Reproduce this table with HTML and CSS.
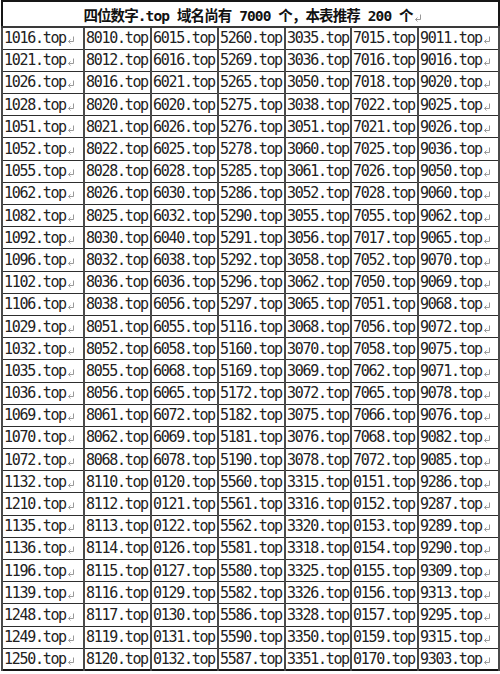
FILE: index.html
```html
<!DOCTYPE html>
<html lang="zh">
<head>
<meta charset="utf-8">
<title>四位数字.top 域名</title>
<link rel="stylesheet" href="styles.css">
</head>
<body>
<table class="grid">
<colgroup>
<col class="c-wide"><col class="c-mid"><col class="c-mid"><col class="c-mid"><col class="c-narrow"><col class="c-mid"><col class="c-last">
</colgroup>
<thead>
<tr class="head-row"><th colspan="7">四位数字.top 域名尚有 7000 个，本表推荐 200 个</th></tr>
</thead>
<tbody>
<tr><td>1016.top</td><td>8010.top</td><td>6015.top</td><td>5260.top</td><td>3035.top</td><td>7015.top</td><td>9011.top</td></tr>
<tr><td>1021.top</td><td>8012.top</td><td>6016.top</td><td>5269.top</td><td>3036.top</td><td>7016.top</td><td>9016.top</td></tr>
<tr><td>1026.top</td><td>8016.top</td><td>6021.top</td><td>5265.top</td><td>3050.top</td><td>7018.top</td><td>9020.top</td></tr>
<tr><td>1028.top</td><td>8020.top</td><td>6020.top</td><td>5275.top</td><td>3038.top</td><td>7022.top</td><td>9025.top</td></tr>
<tr><td>1051.top</td><td>8021.top</td><td>6026.top</td><td>5276.top</td><td>3051.top</td><td>7021.top</td><td>9026.top</td></tr>
<tr><td>1052.top</td><td>8022.top</td><td>6025.top</td><td>5278.top</td><td>3060.top</td><td>7025.top</td><td>9036.top</td></tr>
<tr><td>1055.top</td><td>8028.top</td><td>6028.top</td><td>5285.top</td><td>3061.top</td><td>7026.top</td><td>9050.top</td></tr>
<tr><td>1062.top</td><td>8026.top</td><td>6030.top</td><td>5286.top</td><td>3052.top</td><td>7028.top</td><td>9060.top</td></tr>
<tr><td>1082.top</td><td>8025.top</td><td>6032.top</td><td>5290.top</td><td>3055.top</td><td>7055.top</td><td>9062.top</td></tr>
<tr><td>1092.top</td><td>8030.top</td><td>6040.top</td><td>5291.top</td><td>3056.top</td><td>7017.top</td><td>9065.top</td></tr>
<tr><td>1096.top</td><td>8032.top</td><td>6038.top</td><td>5292.top</td><td>3058.top</td><td>7052.top</td><td>9070.top</td></tr>
<tr><td>1102.top</td><td>8036.top</td><td>6036.top</td><td>5296.top</td><td>3062.top</td><td>7050.top</td><td>9069.top</td></tr>
<tr><td>1106.top</td><td>8038.top</td><td>6056.top</td><td>5297.top</td><td>3065.top</td><td>7051.top</td><td>9068.top</td></tr>
<tr><td>1029.top</td><td>8051.top</td><td>6055.top</td><td>5116.top</td><td>3068.top</td><td>7056.top</td><td>9072.top</td></tr>
<tr><td>1032.top</td><td>8052.top</td><td>6058.top</td><td>5160.top</td><td>3070.top</td><td>7058.top</td><td>9075.top</td></tr>
<tr><td>1035.top</td><td>8055.top</td><td>6068.top</td><td>5169.top</td><td>3069.top</td><td>7062.top</td><td>9071.top</td></tr>
<tr><td>1036.top</td><td>8056.top</td><td>6065.top</td><td>5172.top</td><td>3072.top</td><td>7065.top</td><td>9078.top</td></tr>
<tr><td>1069.top</td><td>8061.top</td><td>6072.top</td><td>5182.top</td><td>3075.top</td><td>7066.top</td><td>9076.top</td></tr>
<tr><td>1070.top</td><td>8062.top</td><td>6069.top</td><td>5181.top</td><td>3076.top</td><td>7068.top</td><td>9082.top</td></tr>
<tr><td>1072.top</td><td>8068.top</td><td>6078.top</td><td>5190.top</td><td>3078.top</td><td>7072.top</td><td>9085.top</td></tr>
<tr><td>1132.top</td><td>8110.top</td><td>0120.top</td><td>5560.top</td><td>3315.top</td><td>0151.top</td><td>9286.top</td></tr>
<tr><td>1210.top</td><td>8112.top</td><td>0121.top</td><td>5561.top</td><td>3316.top</td><td>0152.top</td><td>9287.top</td></tr>
<tr><td>1135.top</td><td>8113.top</td><td>0122.top</td><td>5562.top</td><td>3320.top</td><td>0153.top</td><td>9289.top</td></tr>
<tr><td>1136.top</td><td>8114.top</td><td>0126.top</td><td>5581.top</td><td>3318.top</td><td>0154.top</td><td>9290.top</td></tr>
<tr><td>1196.top</td><td>8115.top</td><td>0127.top</td><td>5580.top</td><td>3325.top</td><td>0155.top</td><td>9309.top</td></tr>
<tr><td>1139.top</td><td>8116.top</td><td>0129.top</td><td>5582.top</td><td>3326.top</td><td>0156.top</td><td>9313.top</td></tr>
<tr><td>1248.top</td><td>8117.top</td><td>0130.top</td><td>5586.top</td><td>3328.top</td><td>0157.top</td><td>9295.top</td></tr>
<tr><td>1249.top</td><td>8119.top</td><td>0131.top</td><td>5590.top</td><td>3350.top</td><td>0159.top</td><td>9315.top</td></tr>
<tr><td>1250.top</td><td>8120.top</td><td>0132.top</td><td>5587.top</td><td>3351.top</td><td>0170.top</td><td>9303.top</td></tr>
</tbody>
</table>
</body>
</html>
```

FILE: styles.css
```css
html, body {
  margin: 0;
  padding: 0;
  background: #ffffff;
}

body {
  padding-left: 1px;
  font-family: "DejaVu Sans Mono", "Noto Sans CJK SC", monospace;
  color: #111111;
}

.grid {
  width: 497px;
  table-layout: fixed;
  border-collapse: collapse;
  border: 2px solid #161616;
}

.c-wide { width: 82px; }
.c-mid { width: 67px; }
.c-narrow { width: 66px; }
.c-last { width: 81px; }

.head-row {
  height: 26px;
}

.head-row th {
  padding: 0 0 0 4px;
  font-family: "DejaVu Sans Mono", "Noto Sans CJK SC", sans-serif;
  font-size: 14.5px;
  font-weight: bold;
  text-align: center;
  vertical-align: middle;
  letter-spacing: -0.9px;
  border: 1px solid #2a2a2a;
  border-bottom: 2px solid #3a3a3a;
  white-space: nowrap;
  color: #111111;
}

tbody tr {
  height: 22.2px;
}

td {
  padding: 0 0 0 1px;
  font-size: 15px;
  letter-spacing: -1.3px;
  line-height: 16px;
  vertical-align: middle;
  white-space: nowrap;
  overflow: hidden;
  border-top: 1px solid #2e2e2e;
  border-bottom: 1px solid #2e2e2e;
  border-left: 2px solid #4a4a4a;
  border-right: 2px solid #4a4a4a;
  color: #222222;
}

td::after,
.head-row th::after {
  content: "";
  display: inline-block;
  width: 8px;
  height: 8px;
  margin-left: 1px;
  vertical-align: -1px;
  background: url("data:image/svg+xml,%3Csvg xmlns='http://www.w3.org/2000/svg' viewBox='0 0 8 8'%3E%3Cpath d='M6.5 0.5V5.5H1.5M3.5 3.5L1.5 5.5L3.5 7.5' fill='none' stroke='%23999' stroke-width='1'/%3E%3C/svg%3E") no-repeat;
}
```
